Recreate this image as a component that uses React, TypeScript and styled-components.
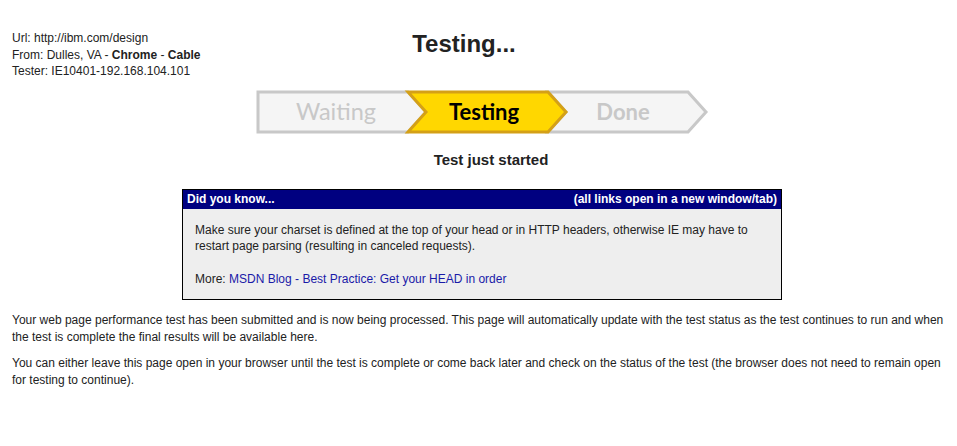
import React from "react";
import styled, { createGlobalStyle } from "styled-components";

const GlobalStyle = createGlobalStyle`
  html, body { margin: 0; padding: 0; background: #fff; }
  body {
    font-family: "Liberation Sans", Arial, Helvetica, sans-serif;
    font-size: 12px;
    color: #222;
  }
`;

const Page = styled.div`
  padding: 30px 12px 0 12px;
`;

const HeaderRow = styled.div`
  display: grid;
  grid-template-columns: 1fr auto 1fr;
  align-items: start;
`;

const TestInfo = styled.div`
  line-height: 16.5px;
  font-size: 12px;
  color: #222;
`;

const Title = styled.h1`
  margin: 0 29px 0 0;
  font-size: 24px;
  font-weight: bold;
  line-height: 28px;
  color: #222;
`;

const Centered = styled.div<{ $shift: number }>`
  display: flex;
  justify-content: center;
  padding-left: ${(p) => p.$shift}px;
`;

const BarWrap = styled(Centered)`
  margin-top: 10px;
`;

const Status = styled.h3`
  margin: 17px 0 0 0;
  font-size: 15px;
  line-height: 18px;
  font-weight: bold;
  color: #222;
`;

const Tip = styled.div`
  width: 598px;
  margin: 20px 0 0 170px;
  border: 1px solid #000;
  background: #eeeeee;
`;

const TipHeader = styled.div`
  display: flex;
  justify-content: space-between;
  align-items: center;
  height: 19px;
  padding: 0 4px;
  background: #000080;
  color: #fff;
  font-weight: bold;
  font-size: 12px;
`;

const TipBody = styled.div`
  padding: 13px 12px 11px 12px;
  font-size: 12px;
  line-height: 16.5px;
  color: #222;
`;

const TipText = styled.p<{ $gap?: number }>`
  margin: ${(p) => p.$gap ?? 0}px 0 0 0;
`;

const Link = styled.a`
  color: #1a1aa8;
  text-decoration: none;
`;

const Para = styled.p<{ $gap: number }>`
  margin: ${(p) => p.$gap}px 0 0 0;
  font-size: 12px;
  line-height: 17px;
  color: #222;
`;

const GRAY_FILL = "#f5f5f5";
const GRAY_STROKE = "#c8c8c8";
const YELLOW_FILL = "#ffd700";
const YELLOW_STROKE = "#d4a017";

function ProgressBar() {
  const top = 2;
  const bot = 42;
  const mid = 22;
  const x0 = 2;
  const x1 = 152;
  const x2 = 292;
  const x3 = 432;
  const tip = 18;
  return (
    <svg width="454" height="44" viewBox="0 0 454 44">
      <polygon
        points={`${x0},${top} ${x1},${top} ${x1 + tip},${mid} ${x1},${bot} ${x0},${bot}`}
        fill={GRAY_FILL}
        stroke={GRAY_STROKE}
        strokeWidth="3"
      />
      <polygon
        points={`${x2},${top} ${x3},${top} ${x3 + tip},${mid} ${x3},${bot} ${x2},${bot} ${x2 + tip},${mid}`}
        fill={GRAY_FILL}
        stroke={GRAY_STROKE}
        strokeWidth="3"
      />
      <polygon
        points={`${x1},${top} ${x2},${top} ${x2 + tip},${mid} ${x2},${bot} ${x1},${bot} ${x1 + tip},${mid}`}
        fill={YELLOW_FILL}
        stroke={YELLOW_STROKE}
        strokeWidth="3"
      />
      <text
        x="80"
        y="30"
        textAnchor="middle"
        fontFamily="Lato, 'Open Sans', sans-serif"
        fontSize="23.5"
        fill="#c8c8c8"
      >
        Waiting
      </text>
      <text
        x="228"
        y="30"
        textAnchor="middle"
        fontFamily="Lato, 'Open Sans', sans-serif"
        fontSize="22"
        fontWeight="bold"
        fill="#000"
      >
        Testing
      </text>
      <text
        x="367"
        y="30"
        textAnchor="middle"
        fontFamily="Lato, 'Open Sans', sans-serif"
        fontSize="22"
        fontWeight="bold"
        fill="#c8c8c8"
      >
        Done
      </text>
    </svg>
  );
}

export default function App() {
  return (
    <>
      <GlobalStyle />
      <Page>
        <HeaderRow>
          <TestInfo>
            Url: http://ibm.com/design
            <br />
            From: Dulles, VA - <b>Chrome</b> - <b>Cable</b>
            <br />
            Tester: IE10401-192.168.104.101
          </TestInfo>
          <Title>Testing...</Title>
          <div />
        </HeaderRow>
        <BarWrap $shift={9}>
          <ProgressBar />
        </BarWrap>
        <Centered $shift={25}>
          <Status>Test just started</Status>
        </Centered>
        <Tip>
          <TipHeader>
            <span>Did you know...</span>
            <span>(all links open in a new window/tab)</span>
          </TipHeader>
          <TipBody>
            <TipText>
              Make sure your charset is defined at the top of your head or in HTTP headers, otherwise IE may
              have to restart page parsing (resulting in canceled requests).
            </TipText>
            <TipText $gap={16.5}>
              More:{" "}
              <Link href="#" target="_blank">
                MSDN Blog - Best Practice: Get your HEAD in order
              </Link>
            </TipText>
          </TipBody>
        </Tip>
        <Para $gap={12}>
          Your web page performance test has been submitted and is now being processed. This page will
          automatically update with the test status as the test continues to run and when the test is complete
          the final results will be available here.
        </Para>
        <Para $gap={9}>
          You can either leave this page open in your browser until the test is complete or come back later and
          check on the status of the test (the browser does not need to remain open for testing to continue).
        </Para>
      </Page>
    </>
  );
}
